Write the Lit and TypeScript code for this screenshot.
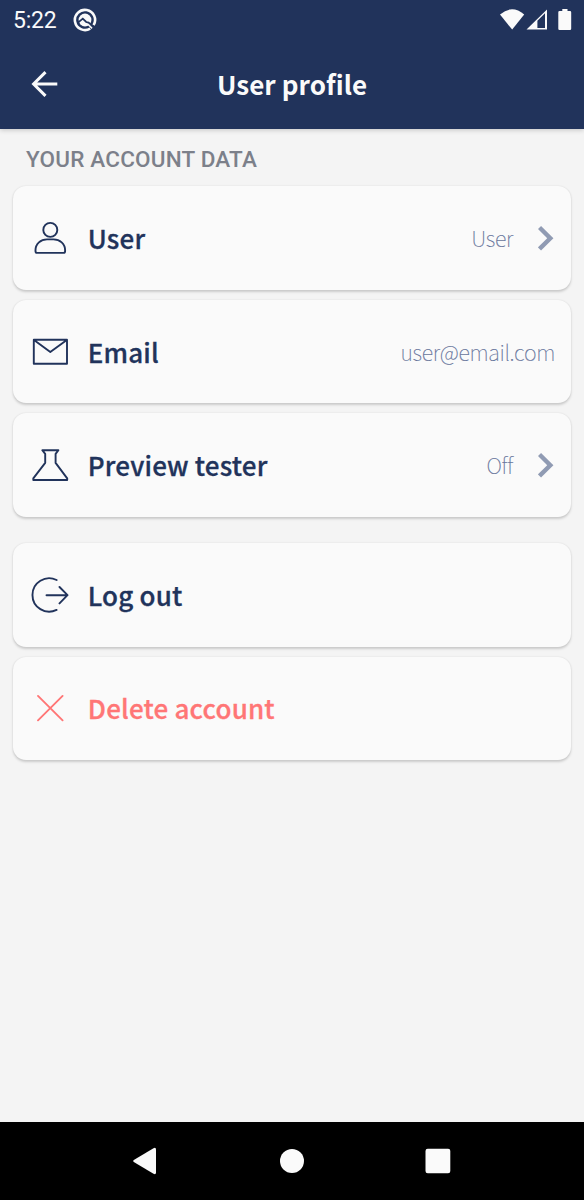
import { LitElement, html, css, svg, nothing } from "lit";
import { customElement, property } from "lit/decorators.js";
import { classMap } from "lit/directives/class-map.js";

const ICONS: Record<string, unknown> = {
  user: svg`<circle cx="20.3" cy="11.9" r="7"/><path d="M5.5 33.3V32.3C5.5 25.8 10.8 21.4 17 21.4H23.6C29.8 21.4 35.1 25.8 35.1 32.3V33.3Q35.1 34.9 33.5 34.9H7.1Q5.5 34.9 5.5 33.3Z"/>`,
  email: svg`<path d="M3.8 7.8H37V31.7H3.8ZM4 8L20.3 20L36.8 8"/>`,
  flask: svg`<path d="M12.3 5.2H28.4L25.6 8.9V17.9L37.2 33.4V35H3.3V33.4L15.2 17.9V8.9Z"/>`,
  logout: svg`<path d="M26.6 5A16.7 16.7 0 1 0 26.6 34.9M16.5 20.2H37.4M29.5 12L37.5 20.2L29.5 28.4"/>`,
  remove: svg`<path d="M8 7.9L32.6 32.3M32.6 7.9L8 32.3"/>`,
};

@customElement("status-bar")
class StatusBar extends LitElement {
  static styles = css`
    :host { display: flex; height: 39px; align-items: center; padding: 0 12px 0 13px; color: #fafafa; }
    .time { font: 400 23px/39px Roboto, sans-serif; padding-top: 2px; letter-spacing: -0.25px; }
    .app { width: 24px; height: 24px; margin-left: 17px; }
    .signals { margin-left: auto; width: 74px; height: 24px; }
    svg { display: block; fill: none; }
  `;
  render() {
    return html`
      <span class="time">5:22</span>
      <svg class="app" viewBox="0 0 24 24">
        <path d="M17.2 20.6A10.1 10.1 0 1 1 20.6 17.2" stroke="#fafafa" stroke-width="2.6"/>
        <circle cx="12" cy="12" r="6.4" fill="#fafafa"/>
        <path d="M5 14.6L9.8 10.6L13.2 14L15.6 14.6L21.5 20.5" stroke="#21335b" stroke-width="1.8"/>
        <path d="M15 16.2L19 20.4" stroke="#fafafa" stroke-width="1.6"/>
      </svg>
      <svg class="signals" viewBox="498 8 74 24">
        <path d="M500 14.5Q512 4 524.2 14.5L512.2 29.6Z" fill="#fafafa"/>
        <path d="M526.5 29.6L547 9.4V29.6ZM537.4 20.8V28.1H545V13.3Z" fill="#fafafa" fill-rule="evenodd"/>
        <path d="M562.3 9H567.5V11H570Q571.2 11 571.2 12.2V28.8Q571.2 30 570 30H559.5Q558.3 30 558.3 28.8V12.2Q558.3 11 559.5 11H562.3Z" fill="#fafafa"/>
      </svg>`;
  }
}

@customElement("profile-row")
class ProfileRow extends LitElement {
  @property() icon = "";
  @property() label = "";
  @property() value = "";
  @property({ type: Boolean }) link = false;
  @property({ type: Boolean }) danger = false;
  static styles = css`
    :host { display: block; }
    .card {
      box-sizing: border-box; height: 103.5px; display: flex; align-items: center;
      padding: 0 16px 0 17px; border-radius: 13px; background: #fafafa; color: #21335b;
      box-shadow: 0 1.5px 2.5px rgba(0, 0, 0, 0.17), 0 0 2px rgba(0, 0, 0, 0.06);
      font-family: "Noto Sans CJK SC", "Noto Sans CJK JP", sans-serif;
    }
    .danger { color: #ff7676; }
    .icon {
      width: 40px; height: 40px; fill: none; stroke: currentColor; stroke-width: 1.9;
      stroke-linejoin: round; stroke-linecap: round;
    }
    .label {
      margin-left: 17.8px; font-size: 26px; line-height: 40px; font-weight: 500; white-space: nowrap;
      letter-spacing: 0.17px; -webkit-text-stroke: 0.3px currentColor;
    }
    .value {
      margin-left: auto; font-size: 21.5px; line-height: 40px; font-weight: 100; color: #66749a;
      letter-spacing: -0.3px; -webkit-text-stroke: 0.15px currentColor; font-variant-ligatures: common-ligatures;
    }
    .chevron { width: 17px; height: 28px; margin-left: 25px; fill: none; stroke: #909bb3; stroke-width: 4.4; }
  `;
  render() {
    return html`<div class=${classMap({ card: true, danger: this.danger })}>
      <svg class="icon" viewBox="0 0 40 40">${ICONS[this.icon]}</svg>
      <span class="label">${this.label}</span>
      ${this.value ? html`<span class="value">${this.value}</span>` : nothing}
      ${this.link ? html`<svg class="chevron" viewBox="0 0 17 28"><path d="M1.5 3.5L12.3 14.2L1.5 24.9"/></svg>` : nothing}
    </div>`;
  }
}

@customElement("app-root")
class AppRoot extends LitElement {
  static styles = css`
    :host { display: flex; flex-direction: column; height: 1200px; background: #f4f4f4; }
    .header { height: 129.4px; background: #21335b; box-shadow: 0 1px 5px rgba(0, 0, 0, 0.2); }
    .bar { display: grid; grid-template-columns: 86px 1fr 86px; height: 90px; align-items: center; }
    .back { width: 30px; height: 30px; margin-left: 30px; fill: none; stroke: #fafafa; stroke-width: 3; }
    .title {
      text-align: center; color: #fafafa; white-space: nowrap; letter-spacing: 0.08px;
      font: 700 26px/40px "Noto Sans CJK SC", "Noto Sans CJK JP", sans-serif;
    }
    .content { flex: 1; padding: 0 13px; }
    .caption {
      padding: 16.8px 13px 0; height: 40.3px; font: 500 22.5px/26px Roboto, sans-serif;
      letter-spacing: 0.19px; color: #7c808a;
    }
    .group { display: grid; gap: 10px; margin-bottom: 26.1px; }
    .nav { height: 78px; background: #000; display: flex; justify-content: center; }
    .keys { width: 340px; height: 78px; fill: #fafafa; }
  `;
  render() {
    return html`
      <header class="header">
        <status-bar></status-bar>
        <div class="bar">
          <svg class="back" viewBox="0 0 30 30"><path d="M27.3 15H4M15.5 3.1L3.6 15L15.5 26.9"/></svg>
          <div class="title">User profile</div>
        </div>
      </header>
      <main class="content">
        <div class="caption">YOUR ACCOUNT DATA</div>
        <div class="group">
          <profile-row icon="user" label="User" value="User" link></profile-row>
          <profile-row icon="email" label="Email" value="user@email.com"></profile-row>
          <profile-row icon="flask" label="Preview tester" value="Off" link></profile-row>
        </div>
        <div class="group">
          <profile-row icon="logout" label="Log out"></profile-row>
          <profile-row icon="remove" label="Delete account" danger></profile-row>
        </div>
      </main>
      <nav class="nav">
        <svg class="keys" viewBox="122 1122 340 78">
          <path d="M133.8 1160L153.5 1148.2Q156 1147 156 1149.5V1172.5Q156 1175 153.5 1173.8L133.8 1162Q132.3 1161 133.8 1160Z"/>
          <circle cx="292" cy="1161" r="12"/>
          <rect x="425.5" y="1148.7" width="24.8" height="24.6" rx="2.2"/>
        </svg>
      </nav>`;
  }
}
